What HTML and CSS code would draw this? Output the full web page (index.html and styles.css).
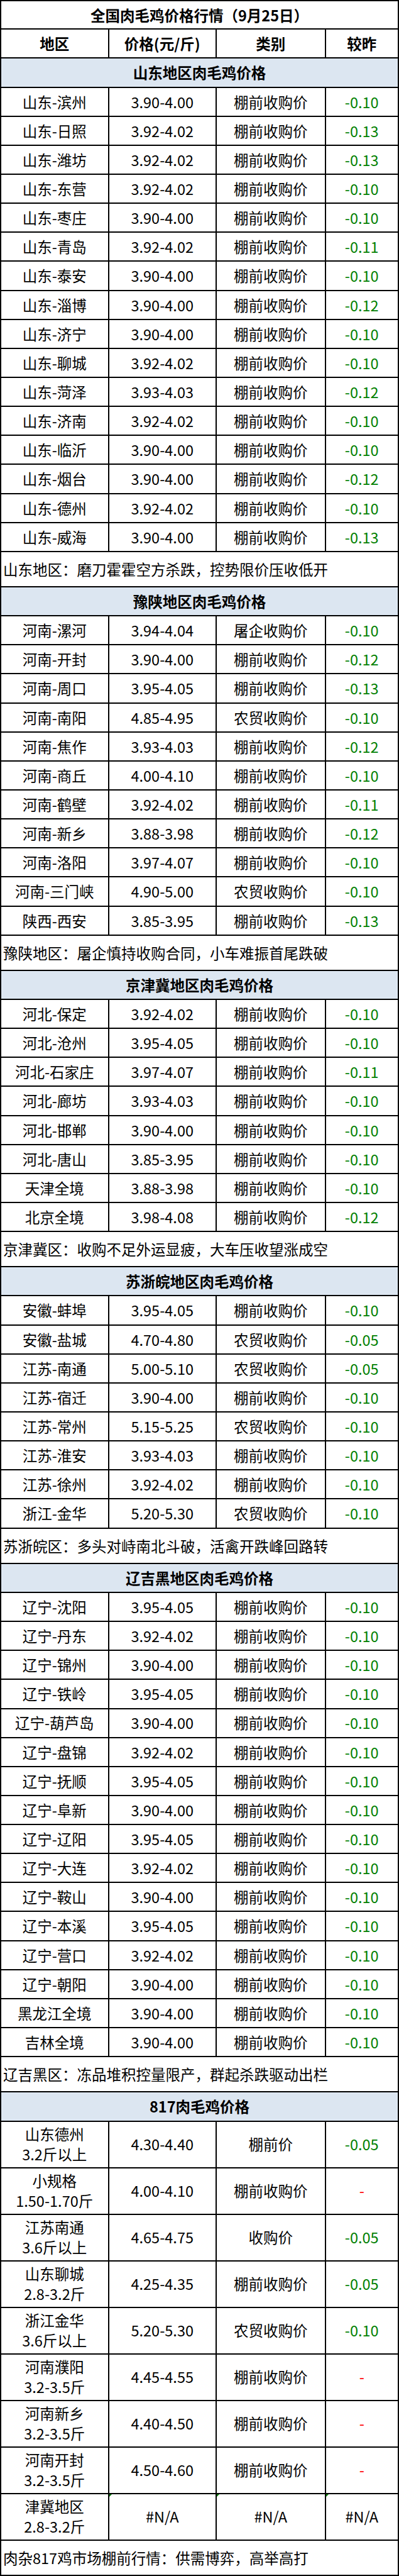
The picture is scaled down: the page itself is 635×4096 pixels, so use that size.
FILE: index.html
```html
<!DOCTYPE html>
<html lang="zh-CN">
<head>
<meta charset="utf-8">
<title>全国肉毛鸡价格行情</title>
<link rel="stylesheet" href="styles.css">
</head>
<body>
<div class="sheet">
  <div class="title">全国肉毛鸡价格行情（9月25日）</div>
  <div class="row head"><div>地区</div><div>价格(元/斤)</div><div>类别</div><div>较昨</div></div>

  <div class="section">山东地区肉毛鸡价格</div>
  <div class="row"><div>山东-滨州</div><div>3.90-4.00</div><div>棚前收购价</div><div class="down">-0.10</div></div>
  <div class="row"><div>山东-日照</div><div>3.92-4.02</div><div>棚前收购价</div><div class="down">-0.13</div></div>
  <div class="row"><div>山东-潍坊</div><div>3.92-4.02</div><div>棚前收购价</div><div class="down">-0.13</div></div>
  <div class="row"><div>山东-东营</div><div>3.92-4.02</div><div>棚前收购价</div><div class="down">-0.10</div></div>
  <div class="row"><div>山东-枣庄</div><div>3.90-4.00</div><div>棚前收购价</div><div class="down">-0.10</div></div>
  <div class="row"><div>山东-青岛</div><div>3.92-4.02</div><div>棚前收购价</div><div class="down">-0.11</div></div>
  <div class="row"><div>山东-泰安</div><div>3.90-4.00</div><div>棚前收购价</div><div class="down">-0.10</div></div>
  <div class="row"><div>山东-淄博</div><div>3.90-4.00</div><div>棚前收购价</div><div class="down">-0.12</div></div>
  <div class="row"><div>山东-济宁</div><div>3.90-4.00</div><div>棚前收购价</div><div class="down">-0.10</div></div>
  <div class="row"><div>山东-聊城</div><div>3.92-4.02</div><div>棚前收购价</div><div class="down">-0.10</div></div>
  <div class="row"><div>山东-菏泽</div><div>3.93-4.03</div><div>棚前收购价</div><div class="down">-0.12</div></div>
  <div class="row"><div>山东-济南</div><div>3.92-4.02</div><div>棚前收购价</div><div class="down">-0.10</div></div>
  <div class="row"><div>山东-临沂</div><div>3.90-4.00</div><div>棚前收购价</div><div class="down">-0.10</div></div>
  <div class="row"><div>山东-烟台</div><div>3.90-4.00</div><div>棚前收购价</div><div class="down">-0.12</div></div>
  <div class="row"><div>山东-德州</div><div>3.92-4.02</div><div>棚前收购价</div><div class="down">-0.10</div></div>
  <div class="row"><div>山东-威海</div><div>3.90-4.00</div><div>棚前收购价</div><div class="down">-0.13</div></div>
  <div class="note">山东地区：磨刀霍霍空方杀跌，控势限价压收低开</div>

  <div class="section">豫陕地区肉毛鸡价格</div>
  <div class="row"><div>河南-漯河</div><div>3.94-4.04</div><div>屠企收购价</div><div class="down">-0.10</div></div>
  <div class="row"><div>河南-开封</div><div>3.90-4.00</div><div>棚前收购价</div><div class="down">-0.12</div></div>
  <div class="row"><div>河南-周口</div><div>3.95-4.05</div><div>棚前收购价</div><div class="down">-0.13</div></div>
  <div class="row"><div>河南-南阳</div><div>4.85-4.95</div><div>农贸收购价</div><div class="down">-0.10</div></div>
  <div class="row"><div>河南-焦作</div><div>3.93-4.03</div><div>棚前收购价</div><div class="down">-0.12</div></div>
  <div class="row"><div>河南-商丘</div><div>4.00-4.10</div><div>棚前收购价</div><div class="down">-0.10</div></div>
  <div class="row"><div>河南-鹤壁</div><div>3.92-4.02</div><div>棚前收购价</div><div class="down">-0.11</div></div>
  <div class="row"><div>河南-新乡</div><div>3.88-3.98</div><div>棚前收购价</div><div class="down">-0.12</div></div>
  <div class="row"><div>河南-洛阳</div><div>3.97-4.07</div><div>棚前收购价</div><div class="down">-0.10</div></div>
  <div class="row"><div>河南-三门峡</div><div>4.90-5.00</div><div>农贸收购价</div><div class="down">-0.10</div></div>
  <div class="row"><div>陕西-西安</div><div>3.85-3.95</div><div>棚前收购价</div><div class="down">-0.13</div></div>
  <div class="note">豫陕地区：屠企慎持收购合同，小车难振首尾跌破</div>

  <div class="section">京津冀地区肉毛鸡价格</div>
  <div class="row"><div>河北-保定</div><div>3.92-4.02</div><div>棚前收购价</div><div class="down">-0.10</div></div>
  <div class="row"><div>河北-沧州</div><div>3.95-4.05</div><div>棚前收购价</div><div class="down">-0.10</div></div>
  <div class="row"><div>河北-石家庄</div><div>3.97-4.07</div><div>棚前收购价</div><div class="down">-0.11</div></div>
  <div class="row"><div>河北-廊坊</div><div>3.93-4.03</div><div>棚前收购价</div><div class="down">-0.10</div></div>
  <div class="row"><div>河北-邯郸</div><div>3.90-4.00</div><div>棚前收购价</div><div class="down">-0.10</div></div>
  <div class="row"><div>河北-唐山</div><div>3.85-3.95</div><div>棚前收购价</div><div class="down">-0.10</div></div>
  <div class="row"><div>天津全境</div><div>3.88-3.98</div><div>棚前收购价</div><div class="down">-0.10</div></div>
  <div class="row"><div>北京全境</div><div>3.98-4.08</div><div>棚前收购价</div><div class="down">-0.12</div></div>
  <div class="note">京津冀区：收购不足外运显疲，大车压收望涨成空</div>

  <div class="section">苏浙皖地区肉毛鸡价格</div>
  <div class="row"><div>安徽-蚌埠</div><div>3.95-4.05</div><div>棚前收购价</div><div class="down">-0.10</div></div>
  <div class="row"><div>安徽-盐城</div><div>4.70-4.80</div><div>农贸收购价</div><div class="down">-0.05</div></div>
  <div class="row"><div>江苏-南通</div><div>5.00-5.10</div><div>农贸收购价</div><div class="down">-0.05</div></div>
  <div class="row"><div>江苏-宿迁</div><div>3.90-4.00</div><div>棚前收购价</div><div class="down">-0.10</div></div>
  <div class="row"><div>江苏-常州</div><div>5.15-5.25</div><div>农贸收购价</div><div class="down">-0.10</div></div>
  <div class="row"><div>江苏-淮安</div><div>3.93-4.03</div><div>棚前收购价</div><div class="down">-0.10</div></div>
  <div class="row"><div>江苏-徐州</div><div>3.92-4.02</div><div>棚前收购价</div><div class="down">-0.10</div></div>
  <div class="row"><div>浙江-金华</div><div>5.20-5.30</div><div>农贸收购价</div><div class="down">-0.10</div></div>
  <div class="note">苏浙皖区：多头对峙南北斗破，活禽开跌峰回路转</div>

  <div class="section">辽吉黑地区肉毛鸡价格</div>
  <div class="row"><div>辽宁-沈阳</div><div>3.95-4.05</div><div>棚前收购价</div><div class="down">-0.10</div></div>
  <div class="row"><div>辽宁-丹东</div><div>3.92-4.02</div><div>棚前收购价</div><div class="down">-0.10</div></div>
  <div class="row"><div>辽宁-锦州</div><div>3.90-4.00</div><div>棚前收购价</div><div class="down">-0.10</div></div>
  <div class="row"><div>辽宁-铁岭</div><div>3.95-4.05</div><div>棚前收购价</div><div class="down">-0.10</div></div>
  <div class="row"><div>辽宁-葫芦岛</div><div>3.90-4.00</div><div>棚前收购价</div><div class="down">-0.10</div></div>
  <div class="row"><div>辽宁-盘锦</div><div>3.92-4.02</div><div>棚前收购价</div><div class="down">-0.10</div></div>
  <div class="row"><div>辽宁-抚顺</div><div>3.95-4.05</div><div>棚前收购价</div><div class="down">-0.10</div></div>
  <div class="row"><div>辽宁-阜新</div><div>3.90-4.00</div><div>棚前收购价</div><div class="down">-0.10</div></div>
  <div class="row"><div>辽宁-辽阳</div><div>3.95-4.05</div><div>棚前收购价</div><div class="down">-0.10</div></div>
  <div class="row"><div>辽宁-大连</div><div>3.92-4.02</div><div>棚前收购价</div><div class="down">-0.10</div></div>
  <div class="row"><div>辽宁-鞍山</div><div>3.90-4.00</div><div>棚前收购价</div><div class="down">-0.10</div></div>
  <div class="row"><div>辽宁-本溪</div><div>3.95-4.05</div><div>棚前收购价</div><div class="down">-0.10</div></div>
  <div class="row"><div>辽宁-营口</div><div>3.92-4.02</div><div>棚前收购价</div><div class="down">-0.10</div></div>
  <div class="row"><div>辽宁-朝阳</div><div>3.90-4.00</div><div>棚前收购价</div><div class="down">-0.10</div></div>
  <div class="row"><div>黑龙江全境</div><div>3.90-4.00</div><div>棚前收购价</div><div class="down">-0.10</div></div>
  <div class="row"><div>吉林全境</div><div>3.90-4.00</div><div>棚前收购价</div><div class="down">-0.10</div></div>
  <div class="note">辽吉黑区：冻品堆积控量限产，群起杀跌驱动出栏</div>

  <div class="section">817肉毛鸡价格</div>
  <div class="row tall"><div>山东德州<br>3.2斤以上</div><div>4.30-4.40</div><div>棚前价</div><div class="down">-0.05</div></div>
  <div class="row tall"><div>小规格<br>1.50-1.70斤</div><div>4.00-4.10</div><div>棚前收购价</div><div class="nil">-</div></div>
  <div class="row tall"><div>江苏南通<br>3.6斤以上</div><div>4.65-4.75</div><div>收购价</div><div class="down">-0.05</div></div>
  <div class="row tall"><div>山东聊城<br>2.8-3.2斤</div><div>4.25-4.35</div><div>棚前收购价</div><div class="down">-0.05</div></div>
  <div class="row tall"><div>浙江金华<br>3.6斤以上</div><div>5.20-5.30</div><div>农贸收购价</div><div class="down">-0.10</div></div>
  <div class="row tall"><div>河南濮阳<br>3.2-3.5斤</div><div>4.45-4.55</div><div>棚前收购价</div><div class="nil">-</div></div>
  <div class="row tall"><div>河南新乡<br>3.2-3.5斤</div><div>4.40-4.50</div><div>棚前收购价</div><div class="nil">-</div></div>
  <div class="row tall"><div>河南开封<br>3.2-3.5斤</div><div>4.50-4.60</div><div>棚前收购价</div><div class="nil">-</div></div>
  <div class="row tall"><div>津冀地区<br>2.8-3.2斤</div><div class="err">#N/A</div><div class="err">#N/A</div><div class="err">#N/A</div></div>
  <div class="note">肉杂817鸡市场棚前行情：供需博弈，高举高打</div>
</div>
</body>
</html>
```

FILE: styles.css
```css
html, body {
  margin: 0;
  padding: 0;
  background: #ffffff;
}

.sheet {
  width: 635px;
  box-sizing: border-box;
  display: grid;
  grid-template-columns: 169.5px 169.5px 171.5px 1fr;
  gap: 2px;
  padding: 2px;
  background: #000000;
  font-family: "Noto Sans CJK SC", sans-serif;
  font-size: 23.5px;
  color: #000000;
}

.row {
  display: contents;
  --h: 44.15px;
}

.row.tall {
  --h: 72px;
}

.row > div,
.title,
.section,
.note {
  background: #ffffff;
  display: flex;
  align-items: center;
  justify-content: center;
  text-align: center;
  white-space: nowrap;
  line-height: 1.2;
}

.row > div {
  height: var(--h);
  position: relative;
}

.row.tall > div {
  line-height: 31.4px;
}

.title {
  grid-column: 1 / -1;
  height: 43.3px;
  font-weight: 700;
}

.head > div {
  font-weight: 700;
}

.section {
  grid-column: 1 / -1;
  height: 44.15px;
  background: #dce6f1;
  font-weight: 700;
}

.note {
  grid-column: 1 / -1;
  height: 54.2px;
  justify-content: flex-start;
  padding-left: 3px;
}

.down {
  color: #008000;
}

.nil {
  color: #ff0000;
}

.err::before {
  content: "";
  position: absolute;
  left: 0;
  top: 0;
  border-top: 4px solid #008000;
  border-right: 4px solid transparent;
}
```
